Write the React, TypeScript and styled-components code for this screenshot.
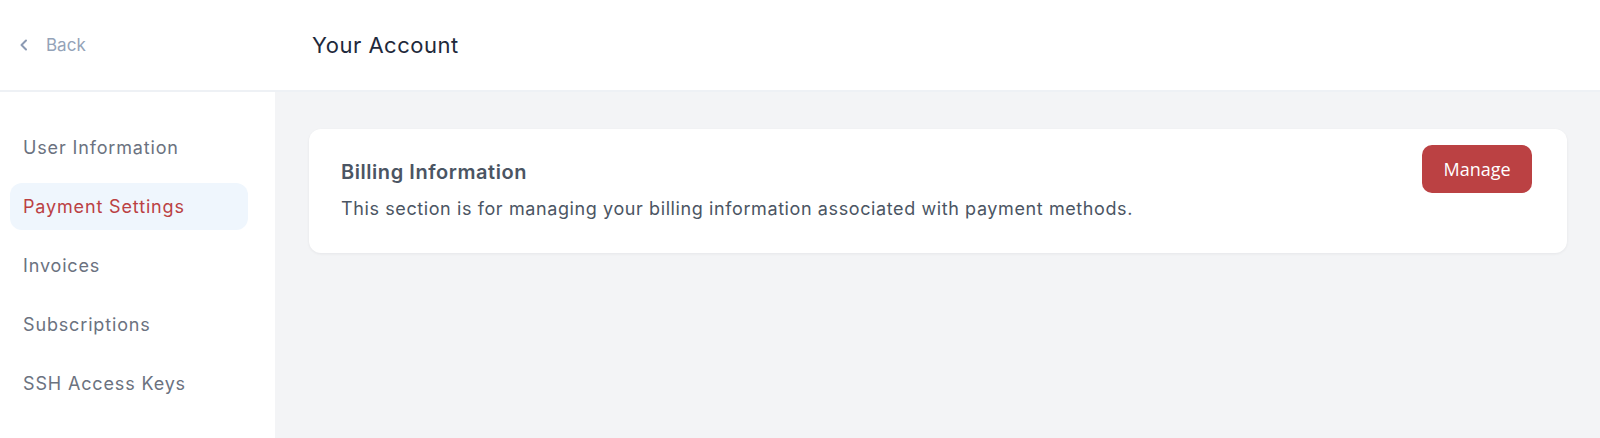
import React from "react";
import styled, { createGlobalStyle } from "styled-components";

const GlobalStyle = createGlobalStyle`
    html, body {
        margin: 0;
        padding: 0;
        background: #ffffff;
    }
    body {
        font-family: Inter, "Open Sans", "Liberation Sans", sans-serif;
        -webkit-font-smoothing: antialiased;
    }
    * {
        box-sizing: border-box;
    }
`;

const Page = styled.div`
    display: flex;
    flex-direction: column;
    width: 1600px;
    height: 438px;
    overflow: hidden;
`;

const Header = styled.header`
    display: flex;
    align-items: center;
    height: 92px;
    flex-shrink: 0;
    background: #ffffff;
    border-bottom: 2px solid #eef1f5;
`;

const BackLink = styled.a`
    display: flex;
    align-items: center;
    gap: 15px;
    width: 312px;
    padding-left: 17px;
    color: #94a3b8;
    font-size: 17px;
    text-decoration: none;
    cursor: pointer;
`;

const Title = styled.h1`
    margin: 0;
    font-size: 22px;
    font-weight: 400;
    letter-spacing: 0.5px;
    color: #1e293b;
`;

const Body = styled.div`
    display: flex;
    flex: 1;
`;

const Sidebar = styled.nav`
    display: flex;
    flex-direction: column;
    gap: 12px;
    width: 275px;
    flex-shrink: 0;
    padding: 32px 27px 0 10px;
    background: #ffffff;
`;

const NavItem = styled.a<{ $active?: boolean }>`
    display: flex;
    align-items: center;
    height: 47px;
    padding-left: 13px;
    border-radius: 12px;
    font-size: 18px;
    letter-spacing: 0.85px;
    color: ${(p) => (p.$active ? "#bb4143" : "#6b7280")};
    background: ${(p) => (p.$active ? "#eff6fd" : "transparent")};
    cursor: pointer;
`;

const Content = styled.main`
    flex: 1;
    padding: 37px 33px 0 34px;
    background: #f3f4f6;
`;

const Card = styled.section`
    display: flex;
    justify-content: space-between;
    align-items: flex-start;
    padding: 16px 35px 31px 32px;
    background: #ffffff;
    border-radius: 12px;
    box-shadow: 0 1px 3px rgba(15, 23, 42, 0.06);
`;

const CardText = styled.div`
    display: flex;
    flex-direction: column;
    gap: 12px;
    padding-top: 15px;
`;

const CardTitle = styled.h2`
    margin: 0;
    font-size: 20px;
    line-height: 24px;
    font-weight: 600;
    letter-spacing: 0.55px;
    color: #4b5563;
`;

const CardDescription = styled.p`
    margin: 0;
    font-size: 18px;
    line-height: 26px;
    letter-spacing: 0.6px;
    color: #4b5563;
`;

const Button = styled.button`
    width: 110px;
    height: 48px;
    border: none;
    border-radius: 10px;
    background: #bb4143;
    color: #ffffff;
    font-family: "Open Sans", "Liberation Sans", sans-serif;
    font-size: 18px;
    cursor: pointer;

    &:hover {
        opacity: 0.9;
    }
`;

const ChevronLeft = () => (
    <svg width="14" height="14" viewBox="0 0 14 14" fill="none">
        <path
            d="M9 2.5L4.5 7L9 11.5"
            stroke="#8b9ab3"
            strokeWidth="2"
            strokeLinecap="round"
            strokeLinejoin="round"
        />
    </svg>
);

const navItems = [
    "User Information",
    "Payment Settings",
    "Invoices",
    "Subscriptions",
    "SSH Access Keys",
];

const App: React.FC = () => {
    return (
        <>
            <GlobalStyle />
            <Page>
                <Header>
                    <BackLink>
                        <ChevronLeft />
                        Back
                    </BackLink>
                    <Title>Your Account</Title>
                </Header>
                <Body>
                    <Sidebar>
                        {navItems.map((item) => (
                            <NavItem key={item} $active={item === "Payment Settings"}>
                                {item}
                            </NavItem>
                        ))}
                    </Sidebar>
                    <Content>
                        <Card>
                            <CardText>
                                <CardTitle>Billing Information</CardTitle>
                                <CardDescription>
                                    This section is for managing your billing information
                                    associated with payment methods.
                                </CardDescription>
                            </CardText>
                            <Button>Manage</Button>
                        </Card>
                    </Content>
                </Body>
            </Page>
        </>
    );
};

export default App;
